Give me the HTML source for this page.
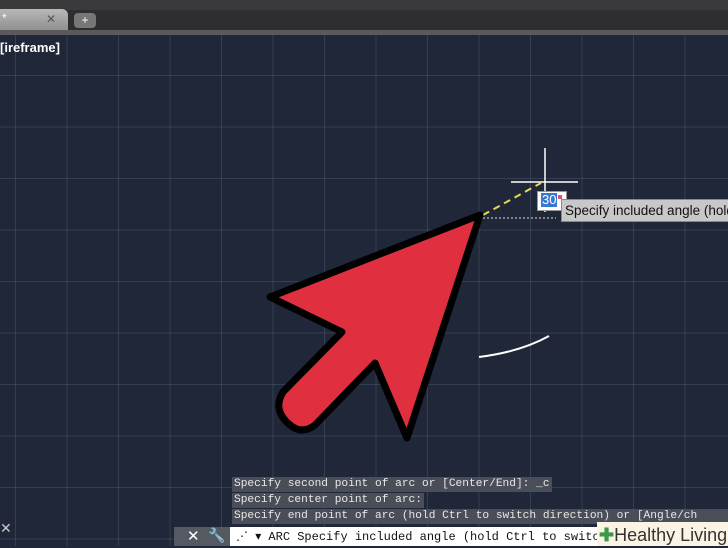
<!DOCTYPE html>
<html><head><style>
body{margin:0;width:728px;height:546px;overflow:hidden;background:#1f2738;font-family:"Liberation Sans",sans-serif;position:relative}
.grid{position:absolute;left:0;top:35px;width:728px;height:511px;
background-image:linear-gradient(90deg,rgba(120,135,160,.25) 1px,transparent 1px),linear-gradient(rgba(120,135,160,.25) 1px,transparent 1px);
background-size:51.5px 51.5px;background-position:15px 40px}
.mono{font-family:"Liberation Mono",monospace;font-size:11.2px;line-height:15px;color:#e8e8e8}
</style></head><body>
<div class="grid"></div>
<div style="position:absolute;left:0;top:0;width:728px;height:10px;background:#3a3a3c"></div>
<div style="position:absolute;left:0;top:10px;width:728px;height:22px;background:#2e2e30"></div>
<div style="position:absolute;left:0;top:9px;width:68px;height:24px;background:linear-gradient(#b8b8b8,#8a8a8a);border-radius:0 6px 0 0"></div>
<div style="position:absolute;left:2px;top:11px;font-size:12px;color:#fff">*</div>
<div style="position:absolute;left:46px;top:12px;font-size:12px;color:#555">✕</div>
<div style="position:absolute;left:74px;top:13px;width:22px;height:15px;background:#777;border-radius:4px;color:#fff;font-size:12px;text-align:center;line-height:15px">+</div>
<div style="position:absolute;left:0;top:30px;width:728px;height:5px;background:#5a5a5c"></div>
<div style="position:absolute;left:0;top:40px;color:#fff;font-size:13px;font-weight:bold">[ireframe]</div>
<svg width="728" height="546" style="position:absolute;left:0;top:0">
<line x1="545" y1="148" x2="545" y2="212" stroke="#fff" stroke-width="1.5"/>
<line x1="511" y1="182" x2="578" y2="182" stroke="#fff" stroke-width="1.5"/>
<line x1="483" y1="215" x2="541" y2="183" stroke="#e8d850" stroke-width="2" stroke-dasharray="7,5"/>
<line x1="483" y1="218" x2="556" y2="218" stroke="#ddd" stroke-width="1" stroke-dasharray="2,2"/>
<path d="M479 357 Q520 352 549 336" stroke="#fff" stroke-width="2" fill="none"/>
<path d="M480 215 L270 297 L342 332 L283 392 Q272 410 290 425 Q302 435 315 425 L375 363 L407 438 Z" fill="#e03040" stroke="#000" stroke-width="7" stroke-linejoin="round"/>
</svg>
<div style="position:absolute;left:537px;top:191px;width:28px;height:18px;background:#fff;border:1px solid #999"></div>
<div style="position:absolute;left:541px;top:193px;background:#3a78d0;color:#fff;font-size:13px;line-height:14px;padding:0 1px">30</div>
<div style="position:absolute;left:558px;top:195px;width:4px;height:4px;background:#e05070"></div>
<div style="position:absolute;left:561px;top:199px;width:170px;height:21px;background:#c8c8c8;border:1px solid #888;font-size:13.5px;line-height:21px;color:#111;white-space:nowrap;overflow:hidden;padding-left:3px">Specify included angle (hold C</div>
<div class="mono" style="position:absolute;left:232px;top:477px;background:#4a4e58;padding:0 2px;white-space:nowrap">Specify second point of arc or [Center/End]: _c</div>
<div class="mono" style="position:absolute;left:232px;top:493px;background:#4a4e58;padding:0 2px;white-space:nowrap">Specify center point of arc:</div>
<div class="mono" style="position:absolute;left:232px;top:509px;background:#4a4e58;padding:0 2px;white-space:nowrap;width:500px;overflow:hidden">Specify end point of arc (hold Ctrl to switch direction) or [Angle/ch</div>
<div style="position:absolute;left:174px;top:527px;width:56px;height:19px;background:#555a62"></div>
<div style="position:absolute;left:187px;top:527px;color:#fff;font-size:15px">✕</div>
<div style="position:absolute;left:208px;top:527px;color:#ddd;font-size:14px">🔧</div>
<div class="mono" style="position:absolute;left:230px;top:527px;width:370px;height:19px;background:#fff;color:#111;line-height:20px;font-size:12px;white-space:nowrap;overflow:hidden;padding-left:6px">⋰ ▾ ARC Specify included angle (hold Ctrl to switc</div>
<div style="position:absolute;left:597px;top:522px;width:131px;height:24px;background:#fbf3e4;color:#333;font-size:18px;line-height:26px;white-space:nowrap;padding-left:2px"><span style="color:#3a9a4a;font-weight:bold">✚</span>Healthy Living</div>
<div style="position:absolute;left:0;top:520px;color:#ccc;font-size:14px">✕</div>
</body></html>
